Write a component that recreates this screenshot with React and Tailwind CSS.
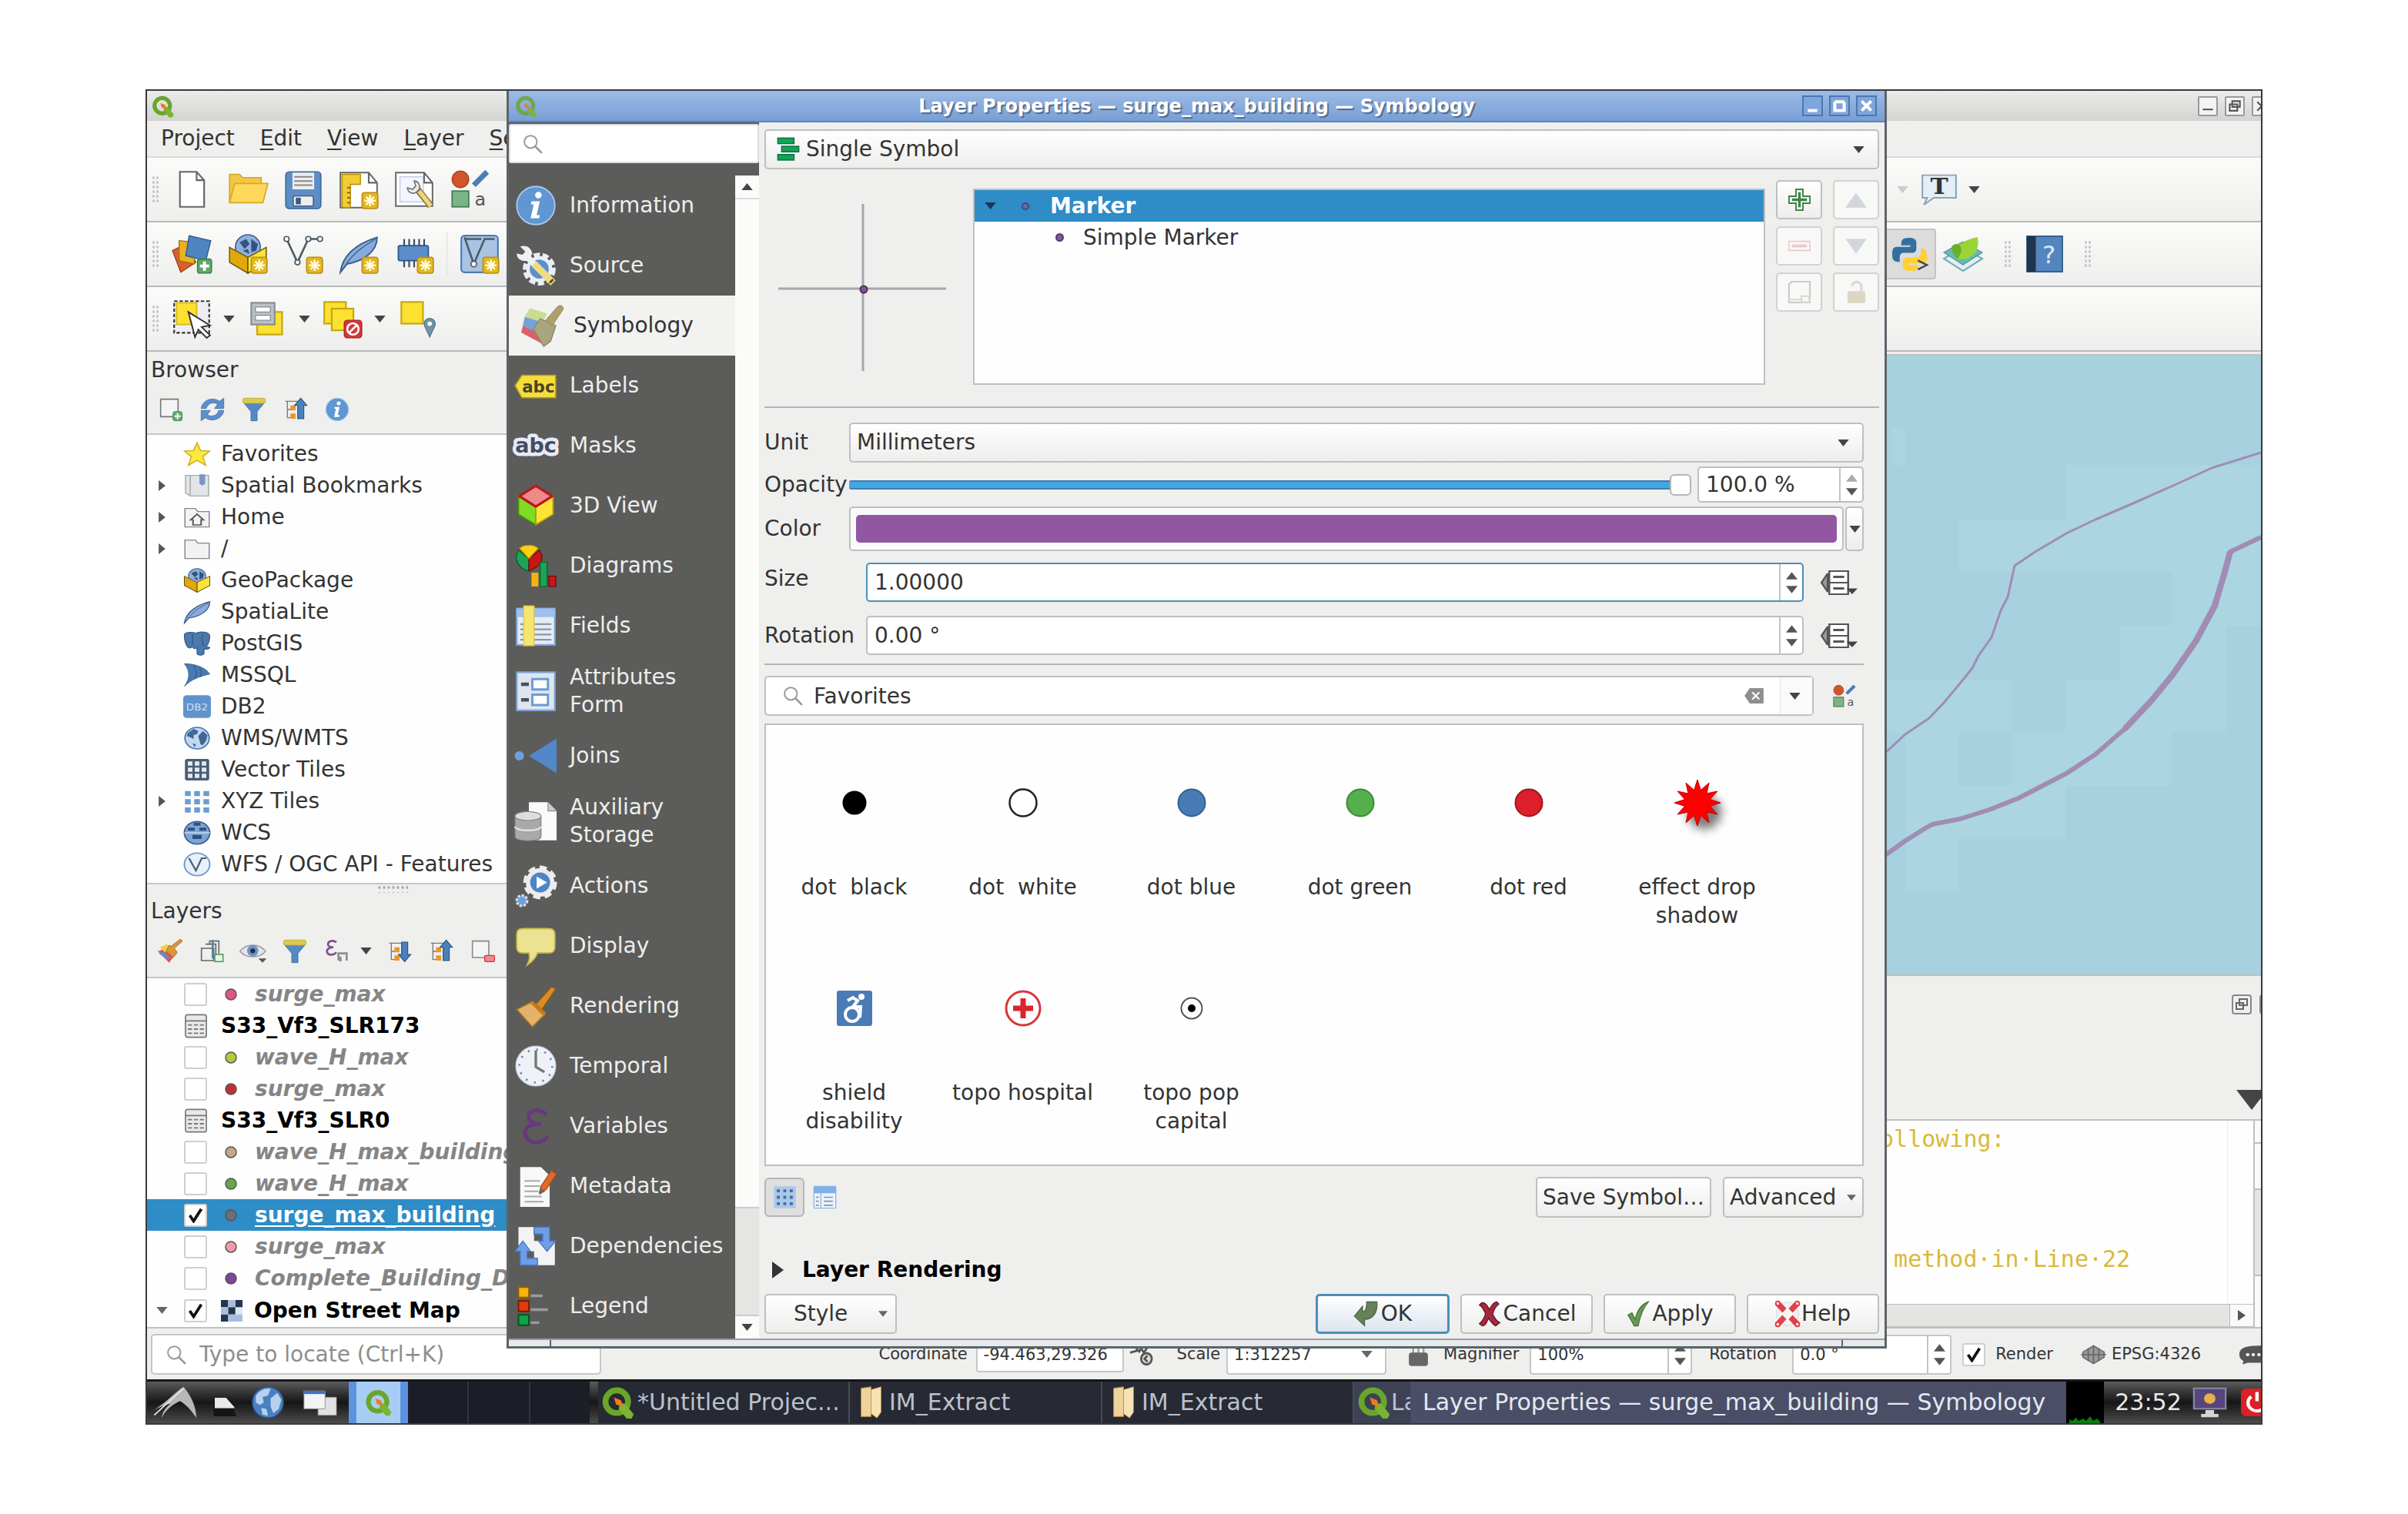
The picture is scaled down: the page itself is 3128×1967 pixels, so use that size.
import { useState } from 'react';

const badge = (
  <g>
    <rect x="14" y="14" width="9.5" height="9.5" rx="1.5" fill="#e3b820" stroke="#b98f10" strokeWidth=".7" />
    <path d="M18.8 15.4v6.8M15.4 18.8h6.8M16.4 16.4l4.8 4.8M21.2 16.4l-4.8 4.8" stroke="#fffbe0" strokeWidth="1.1" />
  </g>
);

const globe = (
  <g>
    <circle cx="12" cy="12" r="10.500" fill="#c3d7f0" stroke="#4a78b5" strokeWidth="1.2" />
    <path d="M4 7l5-4 4 2-1 3-3 1v4l-3-2-3-1zM13 10l4-5 4 4-1 5-3 5-2-1zM8 17l3 1-1 3z" fill="#3f6797" />
  </g>
);

const box = (
  <g>
    <circle cx="12" cy="8" r="7.500" fill="#8fb0dd" stroke="#3d5f90" strokeWidth=".7" />
    <path d="M7 5l4-2 2 3-3 3zM14 3l4 3-1 4-3 1zM9 10l3-1 1 3z" fill="#36537f" />
    <path d="M1 8l11 6v9.500L1 17z" fill="#e0a80c" stroke="#6b560a" strokeWidth=".7" />
    <path d="M23 8l-11 6v9.500L23 17z" fill="#fbe33c" stroke="#6b560a" strokeWidth=".7" />
  </g>
);

const feather = (
  <g>
    <path d="M1 23c1-8 6-16 22-21 0 8-7 14-18 16z" fill="#86abdc" stroke="#3a5f8d" strokeWidth=".9" />
    <path d="M4 19C8 12 14 8 22 3" fill="none" stroke="#3a5f8d" strokeWidth=".6" />
  </g>
);

const tree = (
  <g>
    <path d="M2 4h14M4 4v16h6M4 12h6" fill="none" stroke="#777" strokeWidth="1" />
    <path d="M7 8h5v5H7zM7 16h5v5H7z" fill="#e9962b" />
  </g>
);

const manager = (
  <g>
    <circle cx="6.500" cy="6" r="5" fill="#d1542b" stroke="#a83e1c" strokeWidth=".6" />
    <rect x="1.500" y="13" width="10" height="9.500" fill="#7cb387" stroke="#3f7f4e" strokeWidth=".8" />
    <path d="M14.500 9.500l8-8" stroke="#4c7eb5" strokeWidth="3.200" />
    <text x="15" y="21.500" fontSize="11" fill="#555">a</text>
  </g>
);

const qgis = (
  <g>
    <circle cx="11" cy="11.500" r="8" fill="none" stroke="#6aa52b" strokeWidth="4.200" />
    <path d="M13 12.500l4 .5 6 7.500-1.500 3h-3.500l-5.500-7z" fill="#79b52f" />
    <path d="M9 8.500l5 2 1.500 4.500-5-1.500z" fill="#ee7b1d" />
  </g>
);

const icons = {
  qgis,
  manager,
  box,
  globe,
  feather,
  file: <path d="M4.500 1.500h10l4.500 5v16h-14.500zM14.500 1.500v5h4.500" fill="#fff" stroke="#666" strokeWidth="1" />,
  open: (
    <g stroke="#d6a92c" strokeWidth=".8">
      <path d="M1 20V3h6l2 2h11v5" fill="#f2c745" />
      <path d="M1 20L4 8.500h20L21 20z" fill="#fdd85a" />
    </g>
  ),
  save: (
    <g>
      <rect x="1.500" y="1.500" width="21" height="22" rx="2" fill="#5d8dc6" stroke="#3d6aa0" strokeWidth=".8" />
      <rect x="5.500" y="2" width="13" height="10" fill="#eee" />
      <path d="M6.500 4.500h11M6.500 7h11M6.500 9.500h11" stroke="#888" strokeWidth=".9" />
      <rect x="6" y="16" width="12" height="6" rx="1" fill="#eee" stroke="#456" strokeWidth=".6" />
      <rect x="7.500" y="17" width="3" height="4" fill="#34598c" />
    </g>
  ),
  layout: (
    <g>
      <path d="M1 2h17l5 6v15H1z" fill="#fff" stroke="#666" strokeWidth=".9" />
      <path d="M2 3h11v6H7v14H2z" fill="#f3cb33" stroke="#b58d10" strokeWidth=".7" />
      <path d="M5 11h2M5 14h2M5 17h2M5 20h2" stroke="#7d6210" strokeWidth=".8" />
      <path d="M18 2v6h5" fill="none" stroke="#666" />
      {badge}
    </g>
  ),
  layoutManager: (
    <g>
      <path d="M1 2h17l5 6v14H1z" fill="#fff" stroke="#666" strokeWidth=".9" />
      <path d="M3.500 4.500h14v15h-14z" fill="#f3f6fd" stroke="#c3cfe8" strokeWidth=".7" />
      <path d="M18 2v6h5" fill="none" stroke="#666" />
      <path d="M14 12l8 10" stroke="#8a7530" strokeWidth="4" />
      <path d="M15 13l7 9" stroke="#ecd583" strokeWidth="2.600" />
      <path d="M8 11c0 3 3 4 5 3l2-2c1-3-1-5-3-5l1 3-2 2z" fill="#eee" stroke="#777" strokeWidth=".8" />
    </g>
  ),
  dataSource: (
    <g strokeWidth=".6">
      <path d="M0 10l8-4 6 11-9 6z" fill="#d9602c" stroke="#9c3f17" />
      <path d="M4 4l10 1-1 13-9-2z" fill="#e9b21e" stroke="#98740f" />
      <path d="M10 1l13 3-3 12-12-3z" fill="#4f84c0" stroke="#2c5586" />
      <rect x="15" y="15" width="8.500" height="8.500" rx="1.500" fill="#5fa868" stroke="#357a41" />
      <path d="M19.200 16.500v5.500M16.500 19.200H22" stroke="#fff" strokeWidth="1.800" />
    </g>
  ),
  newPackage: <g>{box}{badge}</g>,
  newShape: (
    <g>
      <path d="M2 3l6.500 14L15 3h7" fill="none" stroke="#4b5b66" strokeWidth="1.200" />
      <g fill="#fff" stroke="#4b5b66" strokeWidth=".8">
        <circle cx="2" cy="3" r="1.500" /><circle cx="8.500" cy="17" r="1.500" /><circle cx="15" cy="3" r="1.500" /><circle cx="22" cy="3" r="1.500" />
      </g>
      {badge}
    </g>
  ),
  newFeather: <g>{feather}{badge}</g>,
  newMemory: (
    <g>
      <path d="M6 3v17M9 3v17M12 3v17M15 3v17M18 3v17" stroke="#3a4e66" strokeWidth="1" />
      <rect x="2.500" y="7" width="18" height="9" rx="1" fill="#5b8dcb" stroke="#2d5587" strokeWidth=".8" />
      {badge}
    </g>
  ),
  newVirtual: (
    <g>
      <rect x="1" y="1" width="22" height="22" rx="2" fill="#a9c3e4" stroke="#4f7bb1" strokeWidth="1" />
      <path d="M3 2l5.500 16L15 3h6M3 3h10" fill="none" stroke="#4b5b66" strokeWidth="1.200" />
      <circle cx="8.500" cy="18" r="1.700" fill="#fff" stroke="#4b5b66" strokeWidth=".8" />
      {badge}
    </g>
  ),
  select: (
    <g>
      <path d="M1.500 1.500h21v19h-21z" fill="#eceef4" stroke="#333" strokeWidth="1" strokeDasharray="2 1.200" />
      <rect x="3" y="2.500" width="12" height="13" fill="#fde030" stroke="#d8b912" strokeWidth=".8" />
      <path d="M10 8l13 8-5 1 5 5-2 1.500-5-5-2 4.500z" fill="#fff" stroke="#333" strokeWidth=".9" />
    </g>
  ),
  selectForm: (
    <g>
      <rect x="6" y="8" width="15" height="13.500" fill="#fde030" stroke="#c5a713" />
      <rect x="2.500" y="2.500" width="14" height="13" fill="#b9c0c6" stroke="#868d94" />
      <path d="M5 5h9v3H5zM5 10h9v3H5z" fill="#fff" stroke="#868d94" strokeWidth=".6" />
    </g>
  ),
  deselect: (
    <g>
      <rect x="1" y="2" width="13" height="13" fill="#fde030" stroke="#c5a713" />
      <rect x="5.500" y="6" width="13" height="13" fill="#fde030" stroke="#c5a713" />
      <rect x="13" y="13" width="10.500" height="10.500" rx="1.800" fill="#d5363d" stroke="#a71f27" strokeWidth=".6" />
      <circle cx="18.200" cy="18.200" r="3.400" fill="none" stroke="#fff" strokeWidth="1.200" />
      <path d="M15.800 20.600l4.800-4.800" stroke="#fff" strokeWidth="1.200" />
    </g>
  ),
  selectLocation: (
    <g>
      <rect x="2" y="2" width="13" height="13" fill="#fde030" stroke="#c5a713" />
      <path d="M19 23l-3-6.500a3.300 3.300 0 1 1 6 0z" fill="#6f95a8" stroke="#52788b" strokeWidth=".6" />
      <circle cx="19" cy="15" r="1.300" fill="#fff" />
    </g>
  ),
  addLayer: (
    <g>
      <path d="M2 2h17v17H2z" fill="#f4f4f4" stroke="#777" strokeWidth="1.200" />
      <rect x="14" y="14" width="9" height="9" rx="2" fill="#63a96d" stroke="#3d8048" strokeWidth=".6" />
      <path d="M18.500 15.500v6M15.500 18.500h6" stroke="#fff" strokeWidth="1.500" />
    </g>
  ),
  removeLayer: (
    <g>
      <path d="M2 2h16v16H2z" fill="#f4f4f4" stroke="#888" strokeWidth="1.200" />
      <rect x="14" y="16" width="9.500" height="6" rx="1" fill="#ef8a92" stroke="#dd2c3b" />
    </g>
  ),
  refresh: (
    <g fill="#5c8fcc" stroke="#3c6ba6" strokeWidth=".6">
      <path d="M1 11C2 3 12-1 19 4l4-3v10h-9l3-4c-4-3-10-1-11 4z" />
      <path d="M23 13c-1 8-11 12-18 7l-4 3V13h9l-3 4c4 3 10 1 11-4z" />
    </g>
  ),
  filter: (
    <g>
      <path d="M1.500 5l7.500 9v9h6v-9l7.500-9z" fill="#5489c4" stroke="#41709f" strokeWidth=".7" />
      <rect x="1" y="1" width="22" height="5" rx="2" fill="#dccb4c" stroke="#b5a53b" strokeWidth=".6" />
    </g>
  ),
  collapse: <g>{tree}<path d="M17 1l6 7h-3v13h-6V8h-3z" fill="#4c80b8" stroke="#23507f" strokeWidth=".8" /></g>,
  expand: <g>{tree}<path d="M17 22l6-7h-3V3h-6v12h-3z" fill="#4c80b8" stroke="#23507f" strokeWidth=".8" /></g>,
  info: (
    <g>
      <circle cx="12" cy="12" r="11" fill="#6096d2" stroke="#a9c8ec" strokeWidth=".8" />
      <circle cx="13.500" cy="6" r="1.900" fill="#fff" />
      <path d="M9.500 9.500h4.800l-1.800 8h1.800l-.3 1.800H9l1.800-8H9.200z" fill="#fff" />
    </g>
  ),
  star: <path d="M12 1l3 7.500 8 .5-6 5.500 2.500 8.500-7.500-5-7.500 5L7 14.500 1 9l8-.5z" fill="#fdea3c" stroke="#cda91b" strokeWidth="1" />,
  bookmark: (
    <g>
      <path d="M2 2h20v20H6l-4-3z" fill="#e2e4e8" stroke="#aaa" />
      <path d="M6 2v19" stroke="#aaa" />
      <path d="M14 1h5v9l-2.500 2L14 10z" fill="#7899c4" />
    </g>
  ),
  home: (
    <g fill="#f2f2f2" stroke="#888" strokeWidth="1">
      <path d="M1.500 21.500v-18h9l2 3h10v15z" />
      <path d="M6.500 14.500L12 9l5.500 5.500h-2v5h-7v-5z" stroke="#555" strokeWidth="1.300" />
    </g>
  ),
  folder: <path d="M1.500 21.500v-18h9l2 3h10v15z" fill="#f2f2f2" stroke="#888" strokeWidth="1" />,
  postgis: (
    <g>
      <path d="M1 4c0-4 8-3 10-2 3-2 12-2 12 3 0 5-1 7-3 10l3 1c-1 2-3 2-5 1v5c-1 2-5 2-6 0v-6c-2 2-3 1-4-1-2 2-4 2-5-1C1 10 1 7 1 4z" fill="#4a79ac" stroke="#305a8a" strokeWidth=".8" />
      <path d="M8 3v10M17 3c-1 4-1 8 1 12" fill="none" stroke="#305a8a" strokeWidth=".9" />
    </g>
  ),
  mssql: (
    <g>
      <path d="M1 1c8 0 18 3 22 10C15 13 7 16 1 23c5-8 5-15 0-22z" fill="#4a79b2" stroke="#355f93" strokeWidth=".6" />
      <path d="M9 3c3 5 3 8 1 13M14 5c2 3 2 5 1 9" fill="none" stroke="#355f93" strokeWidth=".9" />
    </g>
  ),
  db2: (
    <g>
      <rect x="0" y="1" width="24" height="22" rx="3" fill="#5f93cd" />
      <text x="12" y="15.500" fontSize="9" textAnchor="middle" fill="#cfe0f5">DB2</text>
    </g>
  ),
  vtiles: (
    <g>
      <rect x="1.500" y="1.500" width="21" height="21" rx="2" fill="#4a5c72" />
      <path d="M4 4h4v4H4zM10 4h4v4h-4zM16 4h4v4h-4zM4 10h4v4H4zM10 10h4v4h-4zM16 10h4v4h-4zM4 16h4v4H4zM10 16h4v4h-4zM16 16h4v4h-4z" fill="#dfe8f4" />
    </g>
  ),
  xyz: <path d="M1.500 2h5v5h-5zM9.500 2h5v5h-5zM17.500 2h5v5h-5zM1.500 10h5v5h-5zM9.500 10h5v5h-5zM17.500 10h5v5h-5zM1.500 18h5v5h-5zM9.500 18h5v5h-5zM17.500 18h5v5h-5z" fill="#6c9cd3" />,
  wcs: (
    <g>
      <circle cx="12" cy="12" r="11" fill="#7da4d4" stroke="#3e6597" strokeWidth="1.300" />
      <path d="M4 7h6v3H4zM14 7h6v3h-6zM8 14h8v4H8zM9 2h6v3H9z" fill="#2e5280" />
      <path d="M1 12h22" stroke="#c9dbf2" />
    </g>
  ),
  wfs: (
    <g>
      <circle cx="12" cy="12" r="11" fill="#e8f0fa" stroke="#6f9bd0" strokeWidth="1.300" />
      <path d="M5 6l6 12 5-12h4" fill="none" stroke="#4b6078" strokeWidth="1.500" />
    </g>
  ),
  themePaint: (
    <g>
      <path d="M0 12l8-3 9 6-6 8z" fill="#e4524f" />
      <path d="M1 14l4-2 6 5-1 3z" fill="#5c8fcc" />
      <path d="M2 8l7-3 5 5-7 3z" fill="#f2d13c" />
      <path d="M8 12l7 6 4-5-3-4 8-7-2-2-9 7-2-1z" fill="#d9963b" stroke="#9a6420" strokeWidth=".6" />
    </g>
  ),
  addGroup: (
    <g fill="none" stroke="#666" strokeWidth="1.200">
      <path d="M2 9v12h12V9zM6 5h10v12M10 5V2h9v12" />
      <path d="M13 1v18" stroke="#4c87a8" strokeWidth="2" />
      <rect x="15" y="15" width="8" height="7" fill="#eaf5ea" stroke="#4f9a58" />
    </g>
  ),
  eye: (
    <g>
      <path d="M-1 12C5 4 18 4 24 12 18 19 5 19-1 12z" fill="#e6e6ea" stroke="#999" strokeWidth="1" />
      <circle cx="11.500" cy="11.500" r="5.500" fill="#6c93c6" />
      <circle cx="11.500" cy="11.500" r="2.400" fill="#1d3350" />
      <path d="M17 19h8l-4 4z" fill="#555" />
    </g>
  ),
  expression: (
    <g>
      <path d="M12 3C7 0 3 3 4 6c1 2 4 2 5 2-4 0-7 2-6 5 1 3 6 3 9 0" fill="none" stroke="#7b5291" strokeWidth="2" />
      <path d="M14 21v-7h8v7M16 22v-5" fill="none" stroke="#8a8f92" strokeWidth="2" />
    </g>
  ),
  table: (
    <g>
      <rect x="1.500" y="1" width="21" height="22" rx="2" fill="#e9e9e9" stroke="#777" strokeWidth="1.300" />
      <path d="M1.500 7h21M4 11h4M10 11h4M16 11h4M4 15h4M10 15h4M16 15h4M4 19h4M10 19h4M16 19h4" stroke="#777" strokeWidth="1.400" />
    </g>
  ),
  raster: (
    <g>
      <path d="M0 0h24v24H0z" fill="#dfe8f4" />
      <path d="M0 0h8v8H0zM16 0h8v8h-8zM8 8h8v8H8zM0 16h8v8H0z" fill="#25344d" />
      <path d="M8 0h8v8H8zM0 8h8v8H0zM16 16h8v8h-8zM8 16h8v8H8z" fill="#a7bfdf" />
    </g>
  ),
  source: (
    <g>
      <circle cx="14" cy="14" r="7" fill="none" stroke="#e8eef6" strokeWidth="5" strokeDasharray="3 1.300" />
      <circle cx="14" cy="14" r="6.500" fill="#5d90cb" stroke="#e8eef6" strokeWidth="2" />
      <path d="M5 5l7 7" stroke="#eef0f2" strokeWidth="3.500" />
      <path d="M1 5c0 4 4 5 7 4l2-4C9 1 6 0 3 1l3 3-1 2z" fill="#eef0f2" />
      <path d="M11 11l11 11" stroke="#f0da82" strokeWidth="4" />
      <path d="M20 22l2-2" stroke="#59480f" strokeWidth="1.200" />
    </g>
  ),
  symbology: (
    <g>
      <path d="M5 2l10 3-3 6L2 7z" fill="#c9dd8e" />
      <path d="M2 7l10 3-2 7-9-5z" fill="#73a3d8" />
      <path d="M1 12l10 5 2 6L0 16z" fill="#d9626a" />
      <path d="M7 14l4-6 9 4-3 9-4 3z" fill="#a9a57e" stroke="#8a8663" strokeWidth=".6" />
      <path d="M14 9l7-8c2-1.500 4 0 3 2l-6 9z" fill="#aea06c" stroke="#8a8663" strokeWidth=".4" />
    </g>
  ),
  labels: (
    <g>
      <path d="M0 12l4-6h19.500v13H4z" fill="#f4de3d" stroke="#b49c14" strokeWidth=".7" />
      <text x="13.500" y="16" fontSize="9.500" fontWeight="bold" textAnchor="middle" fill="#4a4323">abc</text>
    </g>
  ),
  masks: (
    <text x="12" y="16" fontSize="12" fontWeight="bold" textAnchor="middle" fill="#444d5e" stroke="#e6ebfa" strokeWidth="4" strokeLinejoin="round" paintOrder="stroke">abc</text>
  ),
  cube: (
    <g stroke="#7a1010" strokeWidth=".8" strokeLinejoin="round">
      <path d="M2 6l10 6v11L2 17z" fill="#7fdc20" stroke="#4a9410" />
      <path d="M22 6l-10 6v11l10-6z" fill="#fbe433" stroke="#b39a14" />
      <path d="M12 .5L2.500 6.500 12 12.500l9.500-6z" fill="#f08a8a" stroke="#b81a1a" strokeWidth="1.500" />
    </g>
  ),
  diagrams: (
    <g strokeWidth=".5">
      <path d="M8 8L2 3c-3 5 0 11 6 12z" fill="#1ba455" stroke="#065c29" />
      <path d="M8 8l6-5c3 4 2 9-6 12z" fill="#c81616" stroke="#6a0404" />
      <path d="M8 8L2.500 2C5-.5 11-.5 13.500 2z" fill="#fbcf14" stroke="#a98305" />
      <path d="M9.500 16h4v8h-4z" fill="#f0b310" />
      <path d="M14.500 10h4v14h-4z" fill="#1ba455" stroke="#065c29" />
      <path d="M19.500 18h4v6h-4z" fill="#c81616" stroke="#6a0404" />
    </g>
  ),
  fields: (
    <g>
      <path d="M1 2h22v21H1z" fill="#e6ecf6" stroke="#7da4d6" strokeWidth="1" />
      <path d="M1 2h22v5H1z" fill="#9dc1ec" />
      <path d="M3 11h18M3 14h18M3 17h18M3 20h18" stroke="#8b96ab" strokeWidth="1" />
      <path d="M5 .5h6v23H5z" fill="#f6e56f" stroke="#e0ca3c" strokeWidth=".6" />
    </g>
  ),
  form: (
    <g>
      <path d="M1 1h22v22H1z" fill="#dfe5ee" stroke="#7da4d6" strokeWidth="1" />
      <path d="M3.500 8h4.500M3.500 17h4.500" stroke="#455064" strokeWidth="2" />
      <path d="M10 5h9v6h-9zM10 14h9v6h-9z" fill="#fff" stroke="#6c9bd2" strokeWidth="1.300" />
    </g>
  ),
  joins: (
    <g>
      <circle cx="2.500" cy="12" r="2.700" fill="#6ba2dd" />
      <path d="M8 12L24 2v20z" fill="#5288c8" />
    </g>
  ),
  storage: (
    <g>
      <path d="M8 1h11l5 5v17H8z" fill="#fafafa" />
      <path d="M19 1v5h5" fill="#ccc" stroke="#999" strokeWidth=".6" />
      <path d="M0 9v12c0 3 15 3 15 0V9z" fill="#a9a9a9" stroke="#777" strokeWidth=".5" />
      <ellipse cx="7.500" cy="9" rx="7.500" ry="2.600" fill="#dedede" stroke="#888" strokeWidth=".5" />
      <path d="M0 15c0 3 15 3 15 0" fill="none" stroke="#e5e5e5" />
    </g>
  ),
  actions: (
    <g>
      <circle cx="14.500" cy="10" r="8" fill="none" stroke="#ececec" strokeWidth="3.500" strokeDasharray="3.800 2.400" />
      <circle cx="14.500" cy="10" r="7" fill="#4d85c6" stroke="#ececec" strokeWidth="2.500" />
      <path d="M12.500 6.500v7l6-3.500z" fill="#fff" />
      <circle cx="4" cy="20.500" r="3" fill="#6ba2dd" stroke="#d5dbe4" strokeWidth="1.500" strokeDasharray="1.500 .8" />
    </g>
  ),
  display: <path d="M5 2h14c3 0 4 1 4 4v6c0 3-1 4-4 4h-6c-1 3-3 5-6 7 1-2 2-4 1-7H5c-3 0-4-1-4-4V6c0-3 1-4 4-4z" fill="#ece391" stroke="#c7b94d" strokeWidth=".8" />,
  rendering: (
    <g>
      <path d="M12 11l9-10 2.500 1-8 12z" fill="#da8d22" stroke="#8f5a11" strokeWidth=".5" />
      <path d="M1 14l8-4 8 7-7 7z" fill="#e4b36a" stroke="#a97228" strokeWidth=".7" />
      <path d="M10 9l8 7-1.500 2-8-8z" fill="#c77b1c" />
    </g>
  ),
  temporal: (
    <g>
      <circle cx="12" cy="12" r="11.500" fill="#eef1f6" stroke="#ccd3de" strokeWidth=".6" />
      <circle cx="12" cy="12" r="9.500" fill="none" stroke="#5f87b8" strokeWidth="1.200" strokeDasharray="1 3.970" />
      <path d="M12 3v9.500l5 3" fill="none" stroke="#777" strokeWidth="1.500" />
    </g>
  ),
  variables: <path d="M18 5.500C14 1 7 3 8 7.500c1 3 5 3.500 7 3.500-7-1-11 3-8.500 7.500 3 4.500 9.500 3.500 12.500-.5" fill="none" stroke="#663a7c" strokeWidth="2.300" />,
  metadata: (
    <g>
      <path d="M3 1h12l5 5v18H3z" fill="#f8f8f8" />
      <path d="M5.500 9h9M5.500 12h9M5.500 15h8M5.500 18h10M5.500 21h11" stroke="#a8a8a8" strokeWidth=".9" />
      <path d="M14 16l1-4 6-9 3 2-6 9z" fill="#dd6a2b" stroke="#a84512" strokeWidth=".5" />
      <path d="M14 17l.5-4 3 2z" fill="#666" />
    </g>
  ),
  dependencies: (
    <g>
      <path d="M2 1h9v14H2zM11 9h12v14H11z" fill="#f3f3f3" />
      <path d="M11 1h9v8h3.500l-5 6-5-6H16V5h-5z" fill="#6e9fe6" stroke="#4576c4" strokeWidth=".6" />
      <path d="M13 23H3v-8H0l4.500-6L9 15H7v4h6z" fill="#6e9fe6" stroke="#4576c4" strokeWidth=".6" />
    </g>
  ),
  legend: (
    <g>
      <path d="M2 1h6v6H2z" fill="#f7b50b" stroke="#8d6300" strokeWidth=".8" />
      <path d="M2 9h6v6H2z" fill="#e13d0c" stroke="#7a1a00" strokeWidth=".8" />
      <path d="M2 17h6v6H2z" fill="#12a04b" stroke="#02531f" strokeWidth=".8" />
      <path d="M9 6h7M9 14h10M9 21.500h5" stroke="#9b9b9b" strokeWidth="1.500" />
    </g>
  ),
  single: (
    <g fill="#12a35a" stroke="#0a6b39" strokeWidth="1">
      <rect x="1" y="1" width="17" height="5.500" /><rect x="5" y="9" width="18" height="5.500" /><rect x="1" y="17" width="17" height="5.500" />
    </g>
  ),
  search: (
    <g fill="none" stroke="#999" strokeWidth="1.800">
      <circle cx="9.500" cy="9.500" r="7.500" />
      <path d="M15 15l8 8" strokeWidth="2.400" />
    </g>
  ),
  plus: (
    <g>
      <path d="M8.500 1.500h7v7h7v7h-7v7h-7v-7h-7v-7h7z" fill="#f3faf3" stroke="#3f8446" strokeWidth="1.500" />
      <path d="M12 4.500v15M4.500 12h15" stroke="#3f8446" strokeWidth="2.600" />
    </g>
  ),
  minus: (
    <g fill="none" stroke="#ecc9cd">
      <path d="M1.500 7.500h21v9h-21z" strokeWidth="1.300" />
      <path d="M4.500 12h15" strokeWidth="3" />
    </g>
  ),
  saveDim: (
    <g fill="none" stroke="#c9cacb" strokeWidth="1.600">
      <path d="M4 1.500h18.500v21h-21V4z" />
      <path d="M1.500 19.500h12M14 16h8v6h-8z" stroke="#d9d6cb" />
    </g>
  ),
  unlock: (
    <g>
      <path d="M8 6c0-6 9-5 9 0v5" fill="none" stroke="#d8d8d8" strokeWidth="2.500" />
      <rect x="3" y="11" width="18" height="12" rx="2" fill="#dbd7c4" />
    </g>
  ),
  up: <path d="M12 3l11 18H1z" fill="#d0d6da" />,
  down: <path d="M12 21L23 3H1z" fill="#d0d6da" />,
  override: (
    <g fill="none" stroke="#555" strokeWidth="1.200">
      <path d="M5 4l-4 8 4 8z" fill="#999" />
      <path d="M6 2h12v20H6zM6 12h12" fill="#fff" />
      <path d="M8.500 7h7M8.500 17h7" strokeWidth="2" />
      <path d="M17 17h7l-3.500 5z" fill="#444" stroke="none" />
    </g>
  ),
  clear: (
    <g>
      <path d="M1 12l6-11h16v22H7z" fill="#8f8f8f" />
      <path d="M10 7l8 10M18 7l-8 10" stroke="#fff" strokeWidth="2" />
    </g>
  ),
  grid: (
    <g>
      <rect x="1" y="1" width="22" height="22" rx="1" fill="#a9c8ec" />
      <path d="M4 4h3v3H4zM10.500 4h3v3h-3zM17 4h3v3h-3zM4 10.500h3v3H4zM10.500 10.500h3v3h-3zM17 10.500h3v3h-3zM4 17h3v3H4zM10.500 17h3v3h-3zM17 17h3v3h-3z" fill="#4a6d9b" />
    </g>
  ),
  listView: (
    <g>
      <rect x="1" y="1" width="22" height="22" rx="1" fill="#edf3fb" stroke="#8fb4e0" />
      <path d="M1 1h22v7H1z" fill="#7fb0e6" />
      <path d="M8 8v15" stroke="#8fb4e0" />
      <path d="M3 12h3M3 16h3M3 20h3M11 12h9M11 16h9M11 20h9" stroke="#8096b4" strokeWidth="1.300" />
    </g>
  ),
  ok: <path d="M13 1h10c1 10-4 16-12 16v6L1 14l8-9v5c3 0 4-3 4-9z" fill="#64815a" stroke="#44603b" strokeWidth=".8" />,
  cancel: <path d="M4 2c3-1 5 1 8 6 2-4 4-7 7-7l2 2c-3 2-5 6-6 9 2 4 4 7 7 8l-4 3c-3-1-5-4-7-7-2 4-3 7-6 7l-3-2c3-2 5-6 6-9-2-4-3-7-6-8z" fill="#a52a3c" stroke="#5f1420" strokeWidth=".9" />,
  apply: <path d="M2 13l4-2 3 6C11 9 15 3 22 1c-5 5-8 13-10 22H8C6 19 4 16 2 13z" fill="#679a54" stroke="#40692f" strokeWidth=".8" />,
  help: (
    <g>
      <circle cx="12" cy="12" r="8.500" fill="none" stroke="#f1f1f4" strokeWidth="5" />
      <circle cx="12" cy="12" r="11" fill="none" stroke="#ccc" strokeWidth=".5" />
      <path d="M3 3l6 6M21 3l-6 6M3 21l6-6M21 21l-6-6" stroke="#e04149" strokeWidth="5.500" />
      <g fill="#fff" stroke="#e04149" strokeWidth="1.500">
        <circle cx="2.500" cy="2.500" r="2" /><circle cx="21.500" cy="2.500" r="2" /><circle cx="2.500" cy="21.500" r="2" /><circle cx="21.500" cy="21.500" r="2" />
      </g>
    </g>
  ),
  annotation: (
    <g>
      <path d="M2 2h21v16H9l-6 5 2-5H2z" fill="#e3eef6" stroke="#8ea3b3" strokeWidth="1" />
      <text x="12.500" y="15.500" fontSize="15" fontWeight="bold" textAnchor="middle" fill="#333" fontFamily="DejaVu Serif, serif">T</text>
    </g>
  ),
  python: (
    <g>
      <path d="M11 1c-5 0-5 2-5 5h6v1H3c-3 0-3 3-3 5 0 4 1 5 5 5v-3c0-2 1-3 3-3h5c2 0 3-1 3-3V4c0-2-2-3-5-3z" fill="#34709f" />
      <path d="M12 23c5 0 5-2 5-4h-6v-1h9c3 0 4-3 3-6s-1-4-4-4v3c0 2-1 3-3 3h-5c-2 0-4 1-4 3v3c0 2 2 3 5 3z" fill="#fdd037" />
      <path d="M17 16l6 3-6 3" fill="none" stroke="#444" strokeWidth="1.200" />
    </g>
  ),
  layers: (
    <g>
      <path d="M12 8l12 7-12 8L0 15z" fill="#e4edf0" stroke="#6aa9b0" strokeWidth="1" />
      <path d="M12 4l12 7-12 8L0 11z" fill="#69b8b4" stroke="#4b9797" strokeWidth=".6" />
      <path d="M8 15c-4-7 4-12 13-14 2 9-4 16-13 14z" fill="#9bd437" />
      <path d="M5 7c3-3 6-1 6 3l-2 5c-3-1-4-5-4-8z" fill="#67b02b" />
    </g>
  ),
  book: (
    <g>
      <path d="M0 0h24v24H0z" fill="#5485bf" stroke="#34618f" strokeWidth="1" />
      <path d="M0 0h6v24H0z" fill="#20344b" />
      <text x="15" y="18" fontSize="17" textAnchor="middle" fill="#dbe8f7">?</text>
    </g>
  ),
  extent: (
    <g fill="none" stroke="#555" strokeWidth="2.200">
      <path d="M0 10l8-2L4 1M8 1l7 10M14 1l-5 9M20 2l-5 7" />
      <circle cx="17" cy="16" r="5.500" fill="#ddd" />
      <path d="M18 13l-3 3 3 3" />
    </g>
  ),
  lock: (
    <g>
      <path d="M6 12V2M12 12V2M18 12V2" stroke="#999" strokeWidth="2" />
      <rect x="1" y="10" width="22" height="13" rx="3" fill="#666" />
    </g>
  ),
  crs: (
    <g fill="#999" stroke="#666" strokeWidth="1.200">
      <path d="M12 2l10 7v6l-10 7-10-7V9z" />
      <path d="M0 12h24M7 5v14M17 5v14M12 2v20" />
    </g>
  ),
  bubble: (
    <g>
      <path d="M0 12C0 3 8 2 24 2v19H8l-5 2 1-4c-3-2-4-4-4-7z" fill="#555" />
      <circle cx="8" cy="12" r="1.700" fill="#fff" /><circle cx="13.500" cy="12" r="1.700" fill="#fff" /><circle cx="19" cy="12" r="1.700" fill="#fff" />
    </g>
  ),
  lxle: (
    <g>
      <path d="M0 18C8 12 12 5 17 1c4 6 7 14 7 22-3-6-6-10-9-12-5 3-8 7-10 12 1-6 3-8 5-10-4 1-7 3-10 5z" fill="#b7b7b7" />
      <path d="M1 21L17 2" stroke="#e8e8e8" strokeWidth=".8" />
    </g>
  ),
  terminal: (
    <g>
      <path d="M2 12h17l5 12H2z" fill="#151515" />
      <path d="M3 8h11l8 8v1H3z" fill="#e9e9e9" />
    </g>
  ),
  earth: (
    <g>
      <circle cx="12" cy="12" r="11.500" fill="#4a7fc0" stroke="#28528c" strokeWidth=".8" />
      <path d="M3 7c3-4 7-6 11-5l-2 5-4 1 1 4-3 2-3-2zM14 9l5-4 3 5-2 7-4 3-2-5zM7 16l4 1 1 5-4-1z" fill="#b7d0ee" />
    </g>
  ),
  windows: (
    <g>
      <path d="M11 8h13v14H11z" fill="#dfe1e2" stroke="#999" strokeWidth=".5" />
      <path d="M1 3h15v14H1z" fill="#f4f4f4" stroke="#888" strokeWidth=".5" />
      <path d="M1 3h15v2.500H1z" fill="#3f74c8" />
    </g>
  ),
  files: (
    <g>
      <path d="M2 2l10-1v21H2z" fill="#f0d39a" stroke="#b58f4c" strokeWidth=".6" />
      <path d="M12 3l10-2v18l-4 4-6-3z" fill="#f7e2b3" stroke="#b58f4c" strokeWidth=".6" />
    </g>
  ),
  screen: (
    <g>
      <path d="M1 1h22v16H1z" fill="#56457e" stroke="#8c86a3" strokeWidth="1.200" />
      <circle cx="12" cy="9" r="4" fill="#e8b04a" />
      <path d="M9 18h6v3H9zM6 21h12v2.500H6z" fill="#d5d5d5" />
    </g>
  ),
  power: (
    <g>
      <rect width="24" height="24" rx="4" fill="#dc2027" />
      <path d="M8 7a7 7 0 1 0 9 0M12.500 3v8" fill="none" stroke="#fff" strokeWidth="2.600" />
    </g>
  ),
};

const Icon = ({ name, className }) => (
  <svg viewBox="0 0 24 24" preserveAspectRatio="none" aria-hidden="true" className={`shrink-0 overflow-visible ${className}`}>
    {icons[name]}
  </svg>
);

const Caret = ({ className = 'text-[#444]' }) => (
  <svg viewBox="0 0 16 10" className={`h-[9px] w-[15px] shrink-0 ${className}`} aria-hidden="true">
    <path d="M0 0h16l-8 10z" fill="currentColor" />
  </svg>
);

const Handle = () => (
  <div className="h-9 w-[10px] shrink-0 bg-[radial-gradient(#c4c4c4_1px,transparent_2px)] bg-[size:5px_6px]" />
);

const ToolButton = ({ name, className = 'size-[52px]', label }) => (
  <button type="button" aria-label={label || name} className="shrink-0">
    <Icon name={name} className={className} />
  </button>
);

const Check = ({ checked, label }) => {
  const [on, setOn] = useState(!!checked);
  return (
    <span className="relative size-[30px] shrink-0">
      <input
        type="checkbox"
        aria-label={label}
        checked={on}
        onChange={() => setOn(!on)}
        className="block size-[30px] appearance-none rounded-[3px] border-2 border-[#cfcfcf] bg-white"
      />
      {on && (
        <svg viewBox="0 0 24 24" className="pointer-events-none absolute inset-[5px] size-5" aria-hidden="true">
          <path d="M3 12l6 9L21 2" fill="none" stroke="#111" strokeWidth="4.500" />
        </svg>
      )}
    </span>
  );
};

const browserItems = [
  { name: 'Favorites', icon: 'star' },
  { name: 'Spatial Bookmarks', icon: 'bookmark', children: true },
  { name: 'Home', icon: 'home', children: true },
  { name: '/', icon: 'folder', children: true },
  { name: 'GeoPackage', icon: 'box' },
  { name: 'SpatiaLite', icon: 'feather' },
  { name: 'PostGIS', icon: 'postgis' },
  { name: 'MSSQL', icon: 'mssql' },
  { name: 'DB2', icon: 'db2' },
  { name: 'WMS/WMTS', icon: 'globe' },
  { name: 'Vector Tiles', icon: 'vtiles' },
  { name: 'XYZ Tiles', icon: 'xyz', children: true },
  { name: 'WCS', icon: 'wcs' },
  { name: 'WFS / OGC API - Features', icon: 'wfs' },
];

const layerItems = [
  { name: 'surge_max', color: '#e2557f' },
  { name: 'S33_Vf3_SLR173', group: true },
  { name: 'wave_H_max', color: '#aecb38' },
  { name: 'surge_max', color: '#c22f33' },
  { name: 'S33_Vf3_SLR0', group: true },
  { name: 'wave_H_max_building', color: '#c1a983' },
  { name: 'wave_H_max', color: '#62a74f' },
  { name: 'surge_max_building', color: '#6b7076', selected: true },
  { name: 'surge_max', color: '#f09aa8' },
  { name: 'Complete_Building_Data', color: '#80449b' },
];

const sections = [
  ['Information', 'info'], ['Source', 'source'], ['Symbology', 'symbology'], ['Labels', 'labels'],
  ['Masks', 'masks'], ['3D View', 'cube'], ['Diagrams', 'diagrams'], ['Fields', 'fields'],
  ['Attributes Form', 'form'], ['Joins', 'joins'], ['Auxiliary Storage', 'storage'], ['Actions', 'actions'],
  ['Display', 'display'], ['Rendering', 'rendering'], ['Temporal', 'temporal'], ['Variables', 'variables'],
  ['Metadata', 'metadata'], ['Dependencies', 'dependencies'], ['Legend', 'legend'],
];

const starPoints = Array.from({ length: 24 }, (_, i) => {
  const r = i % 2 ? 17 : 30;
  const a = (i * Math.PI) / 12;
  return `${(40 + r * Math.sin(a)).toFixed(1)},${(40 - r * Math.cos(a)).toFixed(1)}`;
}).join(' ');

const symbols = [
  { name: 'dot  black', art: <circle cx="40" cy="40" r="15.500" fill="#000" /> },
  { name: 'dot  white', art: <circle cx="40" cy="40" r="17.500" fill="#fff" stroke="#222" strokeWidth="2.500" /> },
  { name: 'dot blue', art: <circle cx="40" cy="40" r="17.500" fill="#487bb6" stroke="#34608f" strokeWidth="2" /> },
  { name: 'dot green', art: <circle cx="40" cy="40" r="17.500" fill="#54b04a" stroke="#3d8a35" strokeWidth="2" /> },
  { name: 'dot red', art: <circle cx="40" cy="40" r="17.500" fill="#dc1f2b" stroke="#9c1620" strokeWidth="2" /> },
  {
    name: 'effect drop shadow',
    art: (
      <g>
        <polygon points={starPoints} fill="#000" opacity=".5" transform="translate(9 12)" className="blur-[5px]" />
        <polygon points={starPoints} fill="#fe0000" stroke="#c40000" strokeWidth="1" />
      </g>
    ),
  },
  {
    name: 'shield disability',
    art: (
      <g>
        <rect x="17" y="17" width="46" height="46" rx="3" fill="#4a7bb7" />
        <g fill="none" stroke="#fff" strokeWidth="4">
          <circle cx="37" cy="48" r="9" />
          <path d="M31 30l7-4 6 4-6 8h10l-1 14" />
        </g>
        <circle cx="49" cy="25" r="4" fill="#fff" />
      </g>
    ),
  },
  {
    name: 'topo hospital',
    art: (
      <g>
        <circle cx="40" cy="40" r="22" fill="#fff" stroke="#d9353d" strokeWidth="3" />
        <path d="M40 27v26M27 40h26" stroke="#d9252e" strokeWidth="7" />
      </g>
    ),
  },
  {
    name: 'topo pop capital',
    art: (
      <g>
        <circle cx="40" cy="40" r="13.500" fill="#fff" stroke="#555" strokeWidth="2" />
        <circle cx="40" cy="40" r="5" fill="#000" />
      </g>
    ),
  },
];

const TopBars = () => (
  <>
    <header className="flex h-[39px] items-center bg-linear-to-b from-[#ececeb] to-[#d3d3d2] px-[6px]">
      <Icon name="qgis" className="size-[30px]" />
      <div className="-mr-5 ml-auto flex gap-[9px]">
        {['M4 17h16', 'M8 4h12v9H8zM4 9h12v10H4z', 'M5 5l14 14M19 5L5 19'].map((d) => (
          <button key={d} type="button" aria-label="main window control" className="size-[26px] rounded-[2px] border-2 border-[#999] bg-[#f3f3f3] p-px">
            <svg viewBox="0 0 24 24"><path d={d} fill="none" stroke="#555" strokeWidth="2.500" /></svg>
          </button>
        ))}
      </div>
    </header>
    <nav className="flex h-[48px] items-center gap-[33px] border-b-2 border-[#dadada] pl-[18px] underline-offset-4">
      <a href="#project">Pro<u>j</u>ect</a>
      <a href="#edit"><u>E</u>dit</a>
      <a href="#view"><u>V</u>iew</a>
      <a href="#layer"><u>L</u>ayer</a>
      <a href="#settings"><u>S</u>ettings</a>
    </nav>
    <div className="flex h-[84px] items-center border-b-2 border-[#b9b9b9] bg-linear-to-b from-[#fbfbfa] to-[#eeeeed] pl-[6px]">
      <Handle />
      <div className="ml-[17px] flex gap-5">
        {['file', 'open', 'save', 'layout', 'layoutManager', 'manager'].map((n) => <ToolButton key={n} name={n} />)}
      </div>
      <div className="mr-[365px] ml-auto flex items-center gap-[14px]">
        <Caret className="text-[#ccc]" />
        <ToolButton name="annotation" className="h-[44px] w-[50px]" label="Text annotation" />
        <Caret />
      </div>
    </div>
    <div className="flex h-[84px] items-center border-b-2 border-[#b9b9b9] bg-linear-to-b from-[#fbfbfa] to-[#eeeeed] pl-[6px]">
      <Handle />
      <div className="ml-[17px] flex items-center gap-5">
        {['dataSource', 'newPackage', 'newShape', 'newFeather', 'newMemory'].map((n) => <ToolButton key={n} name={n} />)}
        <span className="-mx-1 h-14 w-px bg-[#ddd]" />
        <ToolButton name="newVirtual" />
      </div>
      <div className="mr-[220px] ml-auto flex items-center">
        <div className="flex h-[66px] w-[72px] items-center justify-end rounded-[4px] border-2 border-[#c4c4c4] bg-[#dcdcdc] pr-2">
          <ToolButton name="python" className="size-[47px]" />
        </div>
        <span className="w-[10px]" />
        <ToolButton name="layers" className="h-[48px] w-[50px]" />
        <span className="w-7" />
        <Handle />
        <span className="w-5" />
        <ToolButton name="book" className="size-[46px]" label="Help contents" />
        <span className="w-7" />
        <Handle />
      </div>
    </div>
    <div className="flex h-[84px] items-center border-b-2 border-[#b9b9b9] bg-linear-to-b from-[#fbfbfa] to-[#eeeeed] pl-[6px]">
      <Handle />
      <div className="ml-4 flex items-center gap-4">
        {['select', 'selectForm', 'deselect'].map((n) => (
          <div key={n} className="flex items-center gap-[15px]">
            <ToolButton name={n} />
            <Caret />
          </div>
        ))}
        <ToolButton name="selectLocation" />
      </div>
    </div>
  </>
);

const BrowserPanel = () => (
  <section>
    <h2 className="flex h-12 items-center pl-[5px]">Browser</h2>
    <div className="flex h-[60px] items-start gap-[22px] border-b-2 border-[#c6c6c6] pt-[11px] pl-[15px]">
      {['addLayer', 'refresh', 'filter', 'collapse', 'info'].map((n) => (
        <ToolButton key={n} name={n} className="size-8" />
      ))}
    </div>
    <ul className="bg-[#fefefe] py-1">
      {browserItems.map((item) => (
        <li key={item.name} className="flex h-[41px] items-center pl-[15px]">
          <span className="w-8">
            {item.children && (
              <svg viewBox="0 0 10 16" className="h-[14px] w-[9px]"><path d="M0 0v16l10-8z" fill="#555" /></svg>
            )}
          </span>
          <Icon name={item.icon} className="h-8 w-9" />
          <span className="ml-[13px] whitespace-nowrap">{item.name}</span>
        </li>
      ))}
    </ul>
  </section>
);

const LayersPanel = () => (
  <section className="border-t-2 border-[#c6c6c6]">
    <div className="ml-[299px] h-[11px] w-10 bg-[radial-gradient(#aaa_1px,transparent_2px)] bg-[size:6px_8px]" />
    <h2 className="flex h-12 items-center pl-[5px]">Layers</h2>
    <div className="flex h-[63px] items-center border-b-2 border-[#c6c6c6] pb-[6px] pl-[14px]">
      <div className="flex gap-[22px]">
        {['themePaint', 'addGroup', 'eye', 'filter', 'expression'].map((n) => (
          <ToolButton key={n} name={n} className="size-8" />
        ))}
      </div>
      <span className="w-[15px]" />
      <Caret />
      <div className="ml-5 flex gap-[22px]">
        {['expand', 'collapse', 'removeLayer'].map((n) => (
          <ToolButton key={n} name={n} className="size-8" />
        ))}
      </div>
    </div>
    <ul className="bg-[#fefefe] font-bold">
      {layerItems.map((layer, i) => (
        <li key={i} className={`flex h-[41px] items-center pl-12 ${layer.selected ? 'bg-[#2e8cc7]' : ''}`}>
          {layer.group ? (
            <>
              <Icon name="table" className="h-8 w-[31px]" />
              <span className="ml-[17px] text-black">{layer.name}</span>
            </>
          ) : (
            <>
              <Check checked={layer.selected} label={layer.name} />
              <svg viewBox="0 0 16 16" className="ml-[23px] size-4 shrink-0">
                <circle cx="8" cy="8" r="7" fill={layer.color} stroke="#555" strokeWidth="1.500" />
              </svg>
              <span className={`ml-[23px] whitespace-nowrap ${layer.selected ? 'text-white underline underline-offset-4' : 'text-[#858585] italic'}`}>
                {layer.name}
              </span>
            </>
          )}
        </li>
      ))}
      <li className="flex h-[43px] items-center pl-3">
        <Caret className="text-[#666]" />
        <span className="w-[21px]" />
        <Check checked label="Open Street Map" />
        <Icon name="raster" className="ml-[18px] size-7" />
        <span className="ml-[15px] text-black">Open Street Map</span>
      </li>
    </ul>
  </section>
);

const MapCanvas = () => (
  <div className="flex h-[808px] justify-end border-y-2 border-[#c0c0c0] bg-[#a7d1de]">
    <svg viewBox="2450 458 488 804" className="h-full w-[488px]" role="img" aria-label="Map canvas">
      <path
        d="M2458 553h18v47h-18zM2684 600h254v71h-254zM2545 671h393v67h-393zM2823 738h115v71h-115zM2754 809h139v70h-139zM2451 879h163v69h-163zM2684 879h209v69h-209zM2476 948h69v69h-69zM2614 948h209v69h-209zM2476 1017h208v69h-208zM2476 1086h69v70h-69z"
        fill="#abd5e1"
      />
      <g fill="none" stroke="#a18cb4" strokeLinejoin="round">
        <path d="M2450 974L2476 950 2507 929 2526 909 2547 884 2563 864 2571 848 2588 824 2600 789 2609 772 2618 731 2643 714 2685 689 2723 671 2774 649 2826 626 2874 604 2938 584" strokeWidth="3" />
        <path d="M2450 1107L2475 1089 2502 1072 2511 1067 2547 1060 2585 1048 2623 1033 2654 1017 2685 1001 2723 976 2761 943 2795 907 2823 873 2854 828 2878 783 2891 739 2898 713 2938 694" strokeWidth="6" />
        <path d="M2761 943L2795 907 2823 873 2854 828 2878 783 2891 739 2898 713" strokeWidth="8" />
      </g>
    </svg>
  </div>
);

const PythonConsole = () => (
  <section className="flex flex-1 flex-col">
    <div className="flex h-[186px] flex-col items-end justify-between pt-6 pb-3">
      <div className="-mr-6 flex gap-[10px]">
        <button type="button" aria-label="Float" className="size-[26px] rounded-[4px] border-2 border-[#888] p-[3px]">
          <svg viewBox="0 0 16 16"><path d="M5 1h10v8H5zM1 6h9v8H1z" fill="none" stroke="#666" strokeWidth="2" /></svg>
        </button>
        <button type="button" aria-label="Close" className="size-[26px] rounded-[4px] border-2 border-[#888]" />
      </div>
      <svg viewBox="0 0 32 26" className="h-[26px] w-8"><path d="M0 0h40L20 26z" fill="#444" /></svg>
    </div>
    <div className="flex flex-1 border-t-2 border-[#c0c0c0]">
      <div className="flex flex-1 flex-col">
        <div className="flex flex-1 justify-end bg-[#fefefe]">
          <pre className="mr-[33px] w-[470px] border-r border-[#ececec] pt-1 font-['DejaVu_Sans_Mono',monospace] text-[30px] leading-[39px] text-[#d9b93a]">
            {'following:\n\n\n\n  method·in·Line·22'}
          </pre>
        </div>
        <div className="flex h-[30px] items-center justify-end border-y border-[#c0c0c0] bg-[#e4e4e3]">
          <span className="flex h-full w-[31px] items-center justify-center border-l border-[#bbb] bg-[#fafafa]">
            <svg viewBox="0 0 10 14" className="h-[14px] w-[10px]"><path d="M0 0v14l10-7z" fill="#555" /></svg>
          </span>
        </div>
      </div>
      <div className="flex w-[10px] flex-col border-l-2 border-[#c0c0c0] bg-[#fafafa]">
        <span className="h-[30px] border-b-2 border-[#c0c0c0]" />
        <span className="h-[60px] border-b-2 border-[#c0c0c0]" />
        <span className="h-[112px] border-b-2 border-[#c0c0c0] bg-[#e4e4e3]" />
      </div>
    </div>
  </section>
);

const Arrows = ({ className = 'w-[30px]', dimUp }) => (
  <span className={`flex h-full shrink-0 flex-col items-center justify-center gap-2 border-l-2 border-[#c4c4c4] ${className}`}>
    <svg viewBox="0 0 16 10" className="h-[10px] w-[15px]"><path d="M0 10h16L8 0z" fill={dimUp ? '#aaa' : '#555'} /></svg>
    <svg viewBox="0 0 16 10" className="h-[10px] w-[15px]"><path d="M0 0h16l-8 10z" fill="#555" /></svg>
  </span>
);

const StatusBar = () => (
  <footer className="flex h-[68px] items-center border-t-2 border-[#c0c0c0] pt-px pl-[5px] text-[21px]">
    <div className="flex h-[53px] w-[585px] items-center rounded-[5px] border-2 border-[#c6c6c6] bg-white px-[18px]">
      <Icon name="search" className="size-[26px]" />
      <input aria-label="Type to locate" placeholder="Type to locate (Ctrl+K)" className="ml-[17px] w-full text-[28px] outline-none placeholder:text-[#8d8d8d]" />
    </div>
    <div className="-mr-1 ml-auto flex shrink-0 items-center">
      <label htmlFor="coord">Coordinate</label>
      <input id="coord" defaultValue="-94.463,29.326" className="ml-[11px] h-[46px] w-[192px] rounded-[4px] border-2 border-[#c6c6c6] bg-white pl-2" />
      <Icon name="extent" className="ml-2 h-8 w-[30px]" />
      <label htmlFor="scale" className="ml-[31px]">Scale</label>
      <div className="ml-2 flex h-[52px] w-[208px] items-center rounded-[4px] border-2 border-[#c6c6c6] bg-white pr-4">
        <select id="scale" className="w-full appearance-none pl-2 leading-[30px] outline-none"><option>1:312257</option></select>
        <Caret className="text-[#666]" />
      </div>
      <Icon name="lock" className="ml-7 h-8 w-[27px]" />
      <label htmlFor="magnifier" className="ml-[19px]">Magnifier</label>
      <div className="ml-[14px] flex h-[52px] w-[211px] items-center rounded-[4px] border-2 border-[#c6c6c6] bg-white">
        <input id="magnifier" defaultValue="100%" className="w-full min-w-0 pl-2" />
        <Arrows />
      </div>
      <label htmlFor="maprot" className="ml-[22px]">Rotation</label>
      <div className="ml-5 flex h-[52px] w-[207px] items-center rounded-[4px] border-2 border-[#c6c6c6] bg-white">
        <input id="maprot" defaultValue="0.0 °" className="w-full min-w-0 pl-2" />
        <Arrows />
      </div>
      <span className="w-[14px]" />
      <Check checked label="Render" />
      <span className="ml-[13px]">Render</span>
      <Icon name="crs" className="ml-9 h-7 w-[33px]" />
      <span className="ml-[7px]">EPSG:4326</span>
      <Icon name="bubble" className="ml-[50px] h-7 w-8" />
    </div>
  </footer>
);

const Sidebar = () => (
  <aside className="flex w-[325px] shrink-0 flex-col bg-[#5c5c5b]">
    <label className="mt-[2px] flex h-[51px] items-center rounded-[3px] border-2 border-[#ddd] bg-white px-4">
      <Icon name="search" className="size-[26px]" />
      <input aria-label="Search properties" className="ml-2 w-full outline-none" />
    </label>
    <div className="mt-4 flex flex-1">
      <ul className="flex-1 text-[#eeeeec]">
        {sections.map(([name, icon]) => {
          const active = name === 'Symbology';
          const tall = name.length > 13;
          return (
            <li key={name}>
              <button
                type="button"
                className={`flex w-full items-center pl-2 text-left leading-[36px] ${tall ? 'h-[91px]' : 'h-[78px]'} ${active ? 'bg-[#f2f2f1] text-[#333]' : ''}`}
              >
                <Icon name={icon} className={`size-[54px] ${active ? 'ml-2' : ''}`} />
                <span className={active ? 'ml-[14px]' : 'ml-[17px]'}>{name}</span>
              </button>
            </li>
          );
        })}
      </ul>
      <div className="flex w-[31px] flex-col items-center bg-[#fbfbfa]">
        <svg viewBox="0 0 16 10" className="my-[10px] h-[9px] w-[15px] shrink-0"><path d="M0 10h16L8 0z" fill="#444" /></svg>
        <span className="w-full flex-1 border-t-2 border-[#ddd]" />
        <span className="h-[142px] w-full border-y-2 border-[#ccc] bg-[#e5e5e4]" />
        <Caret className="my-[10px] text-[#444]" />
      </div>
    </div>
  </aside>
);

const field = 'rounded-[5px] border-2 border-[#bfbfbf]';
const raised = `${field} bg-linear-to-b from-white to-[#ededec]`;

const Spin = ({ id, value, focused }) => (
  <div className={`flex h-[51px] flex-1 items-center rounded-[5px] border-2 bg-white ${focused ? 'border-[#4a90b8]' : 'border-[#bfbfbf]'}`}>
    <input id={id} defaultValue={value} className="w-full min-w-0 pl-[9px] outline-none" />
    <Arrows />
  </div>
);

const LayerProperties = () => {
  const [opacity, setOpacity] = useState(100);

  return (
    <div className="absolute top-0 right-[486px] bottom-[40px] left-[467px] flex flex-col border-x-3 border-b-3 border-[#5d6468] bg-[#efefee]">
      <div className="flex h-[41px] shrink-0 items-center border-b-2 border-[#5d83bb] bg-linear-to-b from-[#9dbbe6] to-[#779fd6] pr-[10px] pl-2">
        <Icon name="qgis" className="size-[30px] opacity-80" />
        <h1 className="flex-1 pl-[69px] text-center text-[24px] font-bold text-white [text-shadow:2px_2px_1px_#56698c]">
          Layer Properties — surge_max_building — Symbology
        </h1>
        <div className="flex gap-2">
          {['M5 19h14', 'M5 6h14M5 6v13h14V6', 'M5 5l14 14M19 5L5 19'].map((d) => (
            <button key={d} type="button" aria-label="window control" className="size-[27px] border-2 border-[#4d76b2] bg-[#7fa5dc] p-px">
              <svg viewBox="0 0 24 24"><path d={d} fill="none" stroke="#fff" strokeWidth="4.500" /></svg>
            </button>
          ))}
        </div>
      </div>
      <div className="flex flex-1">
        <Sidebar />
        <div className="flex flex-1 flex-col pt-[9px] pr-[7px] pl-[7px]">
          <div className={`flex h-[52px] items-center pr-[17px] pl-[14px] ${raised}`}>
            <Icon name="single" className="h-8 w-[30px]" />
            <select aria-label="Renderer" className="w-full appearance-none pl-2 leading-[40px] outline-none"><option>Single Symbol</option></select>
            <Caret />
          </div>

          <div className="mt-[14px] flex">
            <svg viewBox="0 0 271 266" className="h-[266px] w-[271px] shrink-0">
              <path d="M128 31v217M18 141h218" stroke="#a5a6ae" strokeWidth="3" />
              <circle cx="129" cy="142" r="4.500" fill="#7d5a92" stroke="#4c2c5c" strokeWidth="2" />
            </svg>
            <ul className="mt-[11px] h-[255px] flex-1 border-2 border-[#bfbfbf] bg-[#fefefe]">
              <li className="flex h-[41px] items-center bg-[#2e8cc7] pl-[13px] font-bold text-white">
                <Caret className="text-[#123a57]" />
                <span className="mr-[27px] ml-[33px] size-[10px] rounded-full border-2 border-[#3d4b7e] bg-[#6f6aa0]" />
                Marker
              </li>
              <li className="flex h-[41px] items-center pl-[105px]">
                <span className="mr-[25px] size-[11px] rounded-full border-2 border-[#5b3670] bg-[#7d5a92]" />
                Simple Marker
              </li>
            </ul>
            <div className="ml-[14px] grid grid-cols-2 content-start gap-x-[14px] gap-y-[9px]">
              {['plus', 'up', 'minus', 'down', 'saveDim', 'unlock'].map((n) => (
                <button key={n} type="button" aria-label={n} className={`flex h-[51px] w-[60px] items-center justify-center ${n === 'plus' ? raised : 'rounded-[5px] border-2 border-[#d2d2d2] bg-[#f8f8f7]'}`}>
                  <Icon name={n} className={n === 'up' || n === 'down' ? 'h-[26px] w-[30px]' : 'size-[31px]'} />
                </button>
              ))}
            </div>
          </div>

          <hr className="mt-7 border-t-2 border-[#b5b5b5]" />

          <div className="flex flex-col pr-5">
            <div className="mt-[19px] flex h-[52px] items-center">
              <label htmlFor="unit" className="w-[110px]">Unit</label>
              <div className={`flex h-full flex-1 items-center pr-[17px] ${raised}`}>
                <select id="unit" className="w-full appearance-none pl-2 leading-[40px] outline-none"><option>Millimeters</option></select>
                <Caret />
              </div>
            </div>
            <div className="mt-[5px] flex h-[47px] items-center">
              <label htmlFor="opacity" className="w-[110px] shrink-0">Opacity</label>
              <input
                id="opacity"
                type="range"
                value={opacity}
                onChange={(e) => setOpacity(e.target.value)}
                className="h-3 flex-1 appearance-none rounded-[3px] border-y-2 border-[#3b7fae] bg-[#45a5e4] [&::-webkit-slider-thumb]:size-[28px] [&::-webkit-slider-thumb]:appearance-none [&::-webkit-slider-thumb]:rounded-[6px] [&::-webkit-slider-thumb]:border-2 [&::-webkit-slider-thumb]:border-[#b5b5b5] [&::-webkit-slider-thumb]:bg-white"
              />
              <div className={`ml-2 flex h-full w-[216px] items-center bg-white ${field}`}>
                <input aria-label="Opacity value" readOnly value={`${Number(opacity).toFixed(1)} %`} className="w-full min-w-0 pl-[9px] outline-none" />
                <Arrows dimUp />
              </div>
            </div>
            <div className="mt-[5px] flex h-[58px] items-center">
              <span className="w-[110px]">Color</span>
              <button type="button" aria-label="Color" className={`h-full flex-1 p-[7px] ${field} bg-[#fafafa]`}>
                <span className="block h-9 rounded-[5px] bg-[#9157a3]" />
              </button>
              <button type="button" aria-label="Color menu" className={`ml-[2px] flex h-full w-6 items-center justify-center ${raised}`}>
                <Caret />
              </button>
            </div>
            <div className="mt-[15px] flex items-center">
              <label htmlFor="size" className="w-[132px] pb-[10px]">Size</label>
              <Spin id="size" value="1.00000" focused />
              <ToolButton name="override" className="ml-[21px] mr-2 h-9 w-[49px]" label="Size override" />
            </div>
            <div className="mt-[18px] flex items-center">
              <label htmlFor="rot" className="w-[132px]">Rotation</label>
              <Spin id="rot" value="0.00 °" />
              <ToolButton name="override" className="ml-[21px] mr-2 h-9 w-[49px]" label="Rotation override" />
            </div>
            <hr className="mt-[11px] border-t-2 border-[#b5b5b5]" />

            <div className="mt-[14px] flex items-center">
              <div className={`flex h-[52px] flex-1 items-center bg-white pl-[22px] ${field}`}>
                <Icon name="search" className="size-[26px]" />
                <input aria-label="Symbol group" defaultValue="Favorites" className="ml-[14px] flex-1 outline-none" />
                <Icon name="clear" className="mr-5 h-[22px] w-[27px]" />
                <span className="flex h-full w-[42px] items-center justify-center border-l border-[#e5e5e5] bg-[#fafafa] pr-[5px]"><Caret /></span>
              </div>
              <ToolButton name="manager" className="mr-[10px] ml-[24px] size-[31px]" label="Style manager" />
            </div>

            <ul className="mt-[10px] grid h-[575px] grid-cols-[repeat(auto-fill,219px)] content-start border-2 border-[#bfbfbf] bg-[#fefefe] pt-[61px] pl-[5px]">
              {symbols.map((s) => (
                <li key={s.name} className="flex h-[267px] flex-col items-center">
                  <svg viewBox="0 0 80 80" className="size-20 shrink-0 overflow-visible">{s.art}</svg>
                  <span className="mt-[51px] w-[190px] text-center leading-[37px] whitespace-pre-wrap">{s.name}</span>
                </li>
              ))}
            </ul>

            <div className="mt-[14px] flex h-[53px] items-center">
              <button type="button" aria-label="Icon view" className="flex h-[51px] w-[52px] items-center justify-center rounded-[6px] border-2 border-[#b5b5b5] bg-[#dfdfde]">
                <Icon name="grid" className="size-[31px]" />
              </button>
              <span className="w-[11px]" />
              <ToolButton name="listView" className="size-[31px]" label="List view" />
              <button type="button" className={`ml-auto h-full w-[228px] ${raised}`}>Save Symbol…</button>
              <button type="button" className={`ml-[15px] flex h-full w-[183px] items-center justify-between pr-2 pl-[7px] ${raised}`}>
                Advanced
                <svg viewBox="0 0 16 10" className="h-2 w-3"><path d="M0 0h16l-8 10z" fill="#666" /></svg>
              </button>
            </div>
          </div>

          <button type="button" className="mt-12 flex h-10 items-center pl-[10px] text-left font-bold text-black">
            <svg viewBox="0 0 15 22" className="mr-6 h-[22px] w-[15px]"><path d="M0 0v22l15-11z" fill="#333" /></svg>
            Layer Rendering
          </button>

          <div className="mt-[11px] flex h-[52px] gap-[14px]">
            <button type="button" className={`mr-auto flex w-[172px] items-center justify-between pr-[10px] pl-9 ${raised}`}>
              Style
              <svg viewBox="0 0 16 10" className="h-2 w-3"><path d="M0 0h16l-8 10z" fill="#666" /></svg>
            </button>
            <button type="button" className="flex w-[174px] items-center justify-center gap-1 rounded-[5px] border-3 border-[#4a90b8] bg-linear-to-b from-white to-[#dce5ef]">
              <Icon name="ok" className="h-[34px] w-8" />OK
            </button>
            {[['Cancel', 'cancel'], ['Apply', 'apply'], ['Help', 'help']].map(([label, icon]) => (
              <button key={label} type="button" className={`flex w-[172px] items-center justify-center gap-[2px] ${raised}`}>
                <Icon name={icon} className="h-[34px] w-8" />{label}
              </button>
            ))}
          </div>
        </div>
      </div>
      <div className="flex h-[10px] shrink-0 border-t-2 border-[#989d9f] bg-[#e6eaed]">
        <span className="w-[55px] border-r-2 border-[#5d6468]" />
        <span className="mr-[54px] flex-1 border-r-2 border-[#5d6468]" />
      </div>
    </div>
  );
};

const Taskbar = () => (
  <div className="flex h-[57px] items-stretch overflow-hidden border-t-3 border-[#14161a] bg-linear-to-b from-[#5c5c5c] via-[#161616] to-[#4c4c4c] text-[30px] leading-[50px] text-[#b9c2cf]">
    <div className="flex w-[262px] shrink-0 items-center pl-[7px]">
      <ToolButton name="lxle" className="h-11 w-[57px]" label="Menu" />
      <span className="w-5" />
      <ToolButton name="terminal" className="h-9 w-8" />
      <span className="w-5" />
      <ToolButton name="earth" className="size-[42px]" label="Web browser" />
      <span className="w-6" />
      <ToolButton name="windows" className="h-10 w-[44px]" />
    </div>
    <div className="flex w-[77px] shrink-0 items-center justify-center border-x-[10px] border-[#5b93e0] bg-[#a8cdf5]">
      <Icon name="qgis" className="size-9" />
    </div>
    <div className="grid w-[236px] shrink-0 grid-cols-3 gap-[2px] bg-[#33353c]">
      <span className="bg-[#1c1e27]" /><span className="bg-[#1c1e27]" /><span className="bg-[#1c1e27]" />
    </div>
    <span className="w-[11px] shrink-0" />
    <button type="button" className="flex w-[327px] shrink-0 items-center gap-[3px] border-r-2 border-[#484b57] bg-[#272933] pl-1 whitespace-nowrap">
      <Icon name="qgis" className="size-[44px]" />*Untitled Projec...
    </button>
    <button type="button" className="flex w-[328px] shrink-0 items-center gap-2 border-r-2 border-[#484b57] bg-[#272933] pl-3">
      <Icon name="files" className="h-11 w-[31px]" />IM_Extract
    </button>
    <button type="button" className="flex w-[327px] shrink-0 items-center gap-2 border-r-2 border-[#484b57] bg-[#272933] pl-3">
      <Icon name="files" className="h-11 w-[31px]" />IM_Extract
    </button>
    <button type="button" className="flex w-[73px] shrink-0 items-center overflow-hidden bg-[#3d4154] pl-1">
      <Icon name="qgis" className="size-[44px]" />La
    </button>
    <div className="flex flex-1 items-center overflow-hidden bg-[#4a4e66] pl-4 whitespace-nowrap text-[#e4e8f0]">
      Layer Properties — surge_max_building — Symbology
    </div>
    <svg viewBox="0 0 49 54" className="h-full w-[49px] shrink-0 bg-black">
      <path d="M4 54v-5l4 2 5-4 3 4 6-3 4 3 5-6 4 6 5-3 4 4v2z" fill="#0a7d14" />
    </svg>
    <span className="flex w-[115px] shrink-0 items-center justify-center text-[#e8e8e8]">23:52</span>
    <Icon name="screen" className="my-auto h-10 w-[45px]" />
    <Icon name="power" className="my-auto mr-[-14px] ml-[18px] h-9 w-10" />
  </div>
);

export default function App() {
  return (
    <div className="min-h-screen bg-white px-[189px] pt-[116px] font-['DejaVu_Sans',sans-serif] text-[28px] leading-none text-[#333]">
      <div className="overflow-hidden border-2 border-[#3a3a3a]">
        <main className="relative overflow-hidden bg-[#efefee]">
          <TopBars />
          <div className="flex">
            <div className="w-[560px] shrink-0 overflow-hidden">
              <BrowserPanel />
              <LayersPanel />
            </div>
            <div className="flex flex-1 flex-col pt-[3px]">
              <MapCanvas />
              <PythonConsole />
            </div>
          </div>
          <StatusBar />
          <LayerProperties />
        </main>
        <Taskbar />
      </div>
    </div>
  );
}
